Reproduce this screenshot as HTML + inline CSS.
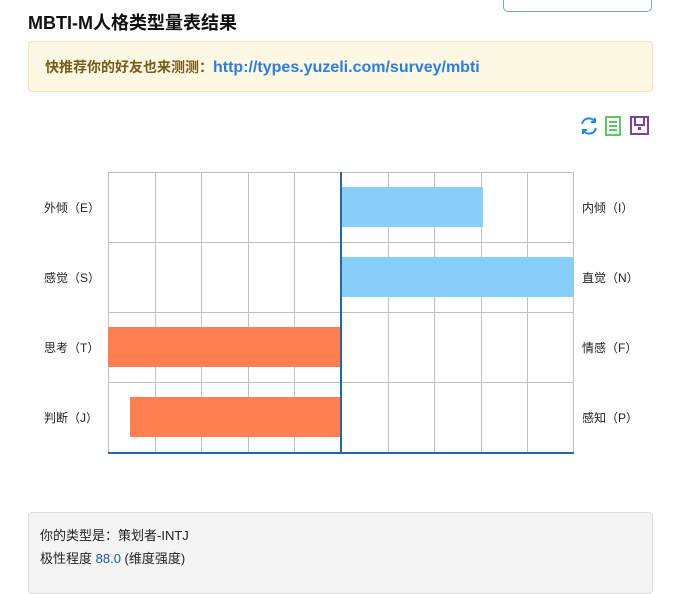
<!DOCTYPE html>
<html><head><meta charset="utf-8"><style>
body{margin:0;width:682px;height:578px;overflow:hidden;background:#fff;font-family:"Liberation Sans","Noto Sans CJK SC",sans-serif;position:relative}
.a{position:absolute}
</style></head><body>
<div class="a" style="left:503px;top:-12px;width:147px;height:22px;border:1px solid #6aa8e8;border-radius:5px;"></div>
<div class="a" style="left:28px;top:9px;font-size:18px;font-weight:bold;color:#111;">MBTI-M人格类型量表结果</div>
<div class="a" style="left:28px;top:41px;width:623px;height:49px;background:#fcf8e3;border:1px solid #f5e4b8;border-radius:4px;"></div>
<div class="a" style="left:45px;top:57px;font-size:14px;font-weight:bold;color:#7a5a1a;">快推荐你的好友也来测测：<span style="color:#2a7ee0;font-size:16px">http://types.yuzeli.com/survey/mbti</span></div>
<svg class="a" style="left:578px;top:115px" width="74" height="22">
<g fill="none" stroke="#1e88f0" stroke-width="2"><path d="M4 9 A7 7 0 0 1 17 7"/><path d="M18 13 A7 7 0 0 1 5 15"/><path d="M17 3 v4 h-4"/><path d="M5 19 v-4 h4"/></g>
<rect x="28" y="2" width="14" height="18" fill="none" stroke="#5cc860" stroke-width="2"/><g stroke="#5cc860" stroke-width="2"><path d="M31 7h8M31 11h8M31 15h8"/></g>
<rect x="53" y="2" width="17" height="17" fill="none" stroke="#7a3fa8" stroke-width="2"/><path d="M57 2v8h9V2" fill="none" stroke="#7a3fa8" stroke-width="2"/><rect x="60" y="12" width="3" height="3" fill="#7a3fa8"/>
</svg>
<svg class="a" style="left:0;top:0" width="682" height="480">
<g stroke="#c0c0c0" stroke-width="1" fill="none">
<path d="M108.5 172v281M155.5 172v281M201.5 172v281M248.5 172v281M294.5 172v281M388.5 172v281M434.5 172v281M481.5 172v281M527.5 172v281M573.5 172v281"/>
<path d="M108 172.5h466M108 242.5h466M108 312.5h466M108 382.5h466"/>
</g>
<rect x="342" y="187" width="141" height="40" fill="#87cefa"/>
<rect x="342" y="257" width="232" height="40" fill="#87cefa"/>
<rect x="108" y="327" width="233" height="40" fill="#ff7f50"/>
<rect x="130" y="397" width="211" height="40" fill="#ff7f50"/>
<path d="M341 172v281M108 453h466" stroke="#1f6aa8" stroke-width="2"/>
<g font-size="12" fill="#222" font-family="Liberation Sans,Noto Sans CJK SC,sans-serif">
<text x="44" y="212">外倾（E）</text><text x="44" y="282">感觉（S）</text><text x="44" y="352">思考（T）</text><text x="44" y="422">判断（J）</text>
<text x="582" y="212">内倾（I）</text><text x="582" y="282">直觉（N）</text><text x="582" y="352">情感（F）</text><text x="582" y="422">感知（P）</text>
</g>
</svg>
<div class="a" style="left:28px;top:512px;width:623px;height:80px;background:#f4f4f4;border:1px solid #ddd;border-radius:4px;"></div>
<div class="a" style="left:40px;top:524px;font-size:13px;color:#222;line-height:23px;">你的类型是：策划者-INTJ<br>极性程度 <span style="color:#1a5aa0">88.0</span> (维度强度)</div>
</body></html>
